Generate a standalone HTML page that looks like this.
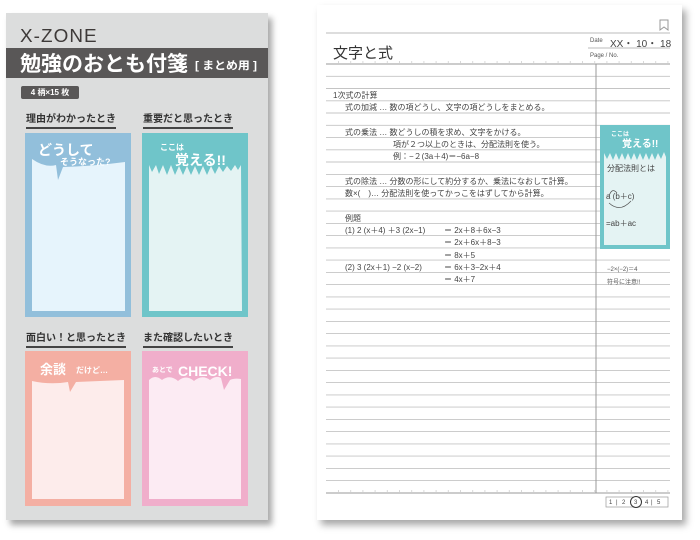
<!DOCTYPE html>
<html><head><meta charset="utf-8"><style>
*{margin:0;padding:0;box-sizing:border-box}
body{width:700px;height:540px;background:#fff;position:relative;overflow:hidden;font-family:"Liberation Sans","Noto Sans CJK JP",sans-serif;color:#333}
.a{position:absolute;white-space:nowrap}
.pkg{left:6px;top:13px;width:262px;height:507px;background:#dcdddd;box-shadow:4px 5px 6px rgba(0,0,0,.35)}
.band{left:6px;top:48px;width:262px;height:30px;background:#595757}
.lbl{font-size:10px;font-weight:bold;color:#333;border-bottom:2px solid #444;line-height:12px;padding-bottom:1px}
.nb{left:317px;top:5px;width:365px;height:515px;background:#fff;box-shadow:4px 5px 7px rgba(0,0,0,.35)}
.t{font-size:8px;color:#444;line-height:10px}
</style></head><body>
<div class="a pkg"></div>
<div class="a" style="left:20px;top:26px;font-size:18px;color:#3e3a39;letter-spacing:1px;transform:scaleX(1.05);transform-origin:left">X-ZONE</div>
<div class="a band"></div>
<svg class="a" style="left:0;top:48px" width="270" height="30"><text x="20" y="23" font-size="21" font-weight="bold" fill="#fff" textLength="168" lengthAdjust="spacingAndGlyphs" font-family="Liberation Sans,Noto Sans CJK JP,sans-serif">勉強のおとも付箋</text><text x="195" y="21" font-size="11" font-weight="bold" fill="#fff" textLength="62" lengthAdjust="spacingAndGlyphs" font-family="Liberation Sans,Noto Sans CJK JP,sans-serif">[ まとめ用 ]</text></svg>
<div class="a" style="left:21px;top:86px;width:58px;height:13px;background:#595757;border-radius:2px;color:#fff;font-size:8px;line-height:13px;text-align:center;font-weight:bold">4 柄×15 枚</div>
<div class="a lbl" style="left:26px;top:114px">理由がわかったとき</div>
<div class="a lbl" style="left:143px;top:114px">重要だと思ったとき</div>
<div class="a lbl" style="left:26px;top:333px">面白い！と思ったとき</div>
<div class="a lbl" style="left:143px;top:333px">また確認したいとき</div>
<svg class="a" style="left:0;top:0" width="300" height="540">
<rect x="25" y="133" width="106" height="184" fill="#92bfdb"/>
<path d="M32 159 Q45 168 56 165 L58 180 L63 167 Q95 166 125 162 L125 311 L32 311Z" fill="#e6f4fc"/>
<rect x="142" y="133" width="106" height="184" fill="#6fc5c9"/>
<path d="M149 165 L152 172 L156 165 L159 174 L163 165 L167 175 L171 165 L175 175 L179 166 L183 175 L187 166 L191 175 L195 166 L199 175 L203 166 L207 175 L211 166 L215 174 L219 166 L223 172 L227 166 L231 171 L235 165 L238 170 L241 165 L242 311 L149 311Z" fill="#e4f3f3"/>
<rect x="25" y="351" width="106" height="155" fill="#f4afa3"/>
<path d="M32 381 Q50 385 68 382 L70 392 L76 382 Q100 381 124 380 L124 499 L32 499Z" fill="#fdeceb"/>
<rect x="142" y="351" width="106" height="155" fill="#f0aecb"/>
<path d="M149 380 Q155 374 162 380 Q170 374 178 381 Q186 374 194 381 Q202 374 210 380 Q216 375 221 378 L224 390 L230 380 Q234 378 241 379 L241 499 L149 499Z" fill="#fcebf3"/>
<g font-family="Liberation Sans,Noto Sans CJK JP,sans-serif" font-weight="bold" fill="#fff">
<text x="38" y="155" font-size="14">どうして</text>
<text x="60" y="165" font-size="9">そうなった?</text>
<text x="160" y="150" font-size="8">ここは</text>
<text x="175" y="165" font-size="14">覚える!!</text>
<text x="40" y="374" font-size="13">余談</text>
<text x="76" y="373" font-size="8">だけど…</text>
<text x="152" y="372" font-size="7">あとで</text>
<text x="178" y="376" font-size="14">CHECK!</text>
</g>
</svg>
<div class="a nb"></div>
<svg class="a" style="left:0;top:0" width="700" height="540">
<g stroke="#bbb" stroke-width="1">
<line x1="326" y1="33" x2="670" y2="33"/>
<line x1="588" y1="48" x2="670" y2="48"/>
</g>
<g stroke="#c4c4c4" stroke-width="0.9">
<line x1="326" y1="76.3" x2="670" y2="76.3"/><line x1="326" y1="88.5" x2="670" y2="88.5"/><line x1="326" y1="100.8" x2="670" y2="100.8"/><line x1="326" y1="113" x2="670" y2="113"/><line x1="326" y1="125.3" x2="670" y2="125.3"/><line x1="326" y1="137.6" x2="670" y2="137.6"/><line x1="326" y1="149.8" x2="670" y2="149.8"/><line x1="326" y1="162" x2="670" y2="162"/><line x1="326" y1="174.4" x2="670" y2="174.4"/><line x1="326" y1="186.6" x2="670" y2="186.6"/><line x1="326" y1="198.9" x2="670" y2="198.9"/><line x1="326" y1="211.1" x2="670" y2="211.1"/><line x1="326" y1="223.4" x2="670" y2="223.4"/><line x1="326" y1="235.6" x2="670" y2="235.6"/><line x1="326" y1="247.9" x2="670" y2="247.9"/><line x1="326" y1="260.1" x2="670" y2="260.1"/><line x1="326" y1="272.4" x2="670" y2="272.4"/><line x1="326" y1="284.6" x2="670" y2="284.6"/><line x1="326" y1="296.9" x2="670" y2="296.9"/><line x1="326" y1="309.1" x2="670" y2="309.1"/><line x1="326" y1="321.4" x2="670" y2="321.4"/><line x1="326" y1="333.6" x2="670" y2="333.6"/><line x1="326" y1="345.9" x2="670" y2="345.9"/><line x1="326" y1="358.1" x2="670" y2="358.1"/><line x1="326" y1="370.4" x2="670" y2="370.4"/><line x1="326" y1="382.6" x2="670" y2="382.6"/><line x1="326" y1="394.9" x2="670" y2="394.9"/><line x1="326" y1="407.1" x2="670" y2="407.1"/><line x1="326" y1="419.4" x2="670" y2="419.4"/><line x1="326" y1="431.6" x2="670" y2="431.6"/><line x1="326" y1="443.9" x2="670" y2="443.9"/><line x1="326" y1="456.1" x2="670" y2="456.1"/><line x1="326" y1="468.4" x2="670" y2="468.4"/><line x1="326" y1="480.6" x2="670" y2="480.6"/>
</g>
<g stroke="#999" stroke-width="1">
<line x1="326" y1="64" x2="670" y2="64"/>
<line x1="326" y1="493" x2="670" y2="493"/>
<line x1="596" y1="64" x2="596" y2="493"/>
</g>
<g stroke="#999" stroke-width="0.8" stroke-dasharray="1 11.2">
<line x1="338" y1="62" x2="670" y2="62"/>
<line x1="338" y1="491" x2="670" y2="491"/>
</g>
<path d="M660 20 h8 v10 l-4 -3 l-4 3z" fill="none" stroke="#999" stroke-width="1"/>
<rect x="600" y="125" width="70" height="124" fill="#6fc5c9"/>
<path d="M604 153 L607 159 L610 153 L613 160 L616 153 L619 160 L622 153 L625 160 L628 153 L631 160 L634 153 L637 160 L640 153 L643 160 L646 153 L649 160 L652 153 L655 160 L658 153 L661 159 L664 152 L666 157 L666 245 L604 245Z" fill="#e4f3f3"/>
<text x="611" y="136" font-size="6" fill="#fff" font-weight="bold" font-family="Liberation Sans,Noto Sans CJK JP,sans-serif">ここは</text>
<text x="622" y="147" font-size="10" fill="#fff" font-weight="bold" font-family="Liberation Sans,Noto Sans CJK JP,sans-serif">覚える!!</text>
<path d="M609 196 Q612 187 617 193 M609 203 Q620 213 631 201" fill="none" stroke="#555" stroke-width="0.7"/>
<rect x="606" y="497" width="62" height="10" fill="#fff" stroke="#999" stroke-width="0.7"/>
<circle cx="636" cy="502" r="5.5" fill="#fff" stroke="#333" stroke-width="1"/>
<g font-size="6" fill="#444" font-family="Liberation Sans,sans-serif"><text x="609" y="504">1</text><text x="616" y="504">|</text><text x="622" y="504">2</text><text x="634" y="504">3</text><text x="645" y="504">4</text><text x="651" y="504">|</text><text x="657" y="504">5</text></g>
</svg>
<div class="a" style="left:333px;top:42px;font-size:15px;color:#333">文字と式</div>
<div class="a" style="left:590px;top:38px;font-size:6px;color:#555">Date</div>
<div class="a" style="left:610px;top:35px;font-size:10px;color:#444">XX・ 10・ 18</div>
<div class="a" style="left:590px;top:53px;font-size:6px;color:#555">Page / No.</div>
<div class="a t" style="left:333px;top:91px">1次式の計算</div>
<div class="a t" style="left:345px;top:103px">式の加減 … 数の項どうし、文字の項どうしをまとめる。</div>
<div class="a t" style="left:345px;top:128px">式の乗法 … 数どうしの積を求め、文字をかける。</div>
<div class="a t" style="left:393px;top:140px">項が２つ以上のときは、分配法則を使う。</div>
<div class="a t" style="left:393px;top:152px">例：−２(3a＋4)＝−6a−8</div>
<div class="a t" style="left:345px;top:177px">式の除法 … 分数の形にして約分するか、乗法になおして計算。</div>
<div class="a t" style="left:345px;top:189px">数×(　)… 分配法則を使ってかっこをはずしてから計算。</div>
<div class="a t" style="left:345px;top:214px">例題</div>
<div class="a t" style="left:345px;top:226px">(1) 2 (x＋4) ＋3 (2x−1)</div>
<div class="a t" style="left:444px;top:226px">＝ 2x＋8＋6x−3</div>
<div class="a t" style="left:444px;top:238px">＝ 2x＋6x＋8−3</div>
<div class="a t" style="left:444px;top:251px">＝ 8x＋5</div>
<div class="a t" style="left:345px;top:263px">(2) 3 (2x＋1) −2 (x−2)</div>
<div class="a t" style="left:444px;top:263px">＝ 6x＋3−2x＋4</div>
<div class="a t" style="left:444px;top:275px">＝ 4x＋7</div>
<div class="a" style="left:607px;top:264px;font-size:6px;color:#555">−2×(−2)＝4</div>
<div class="a" style="left:607px;top:277px;font-size:6px;color:#555">符号に注意!!</div>
<div class="a t" style="left:607px;top:164px">分配法則とは</div>
<div class="a t" style="left:606px;top:192px">a (b＋c)</div>
<div class="a t" style="left:606px;top:219px">=ab＋ac</div>
</body></html>
